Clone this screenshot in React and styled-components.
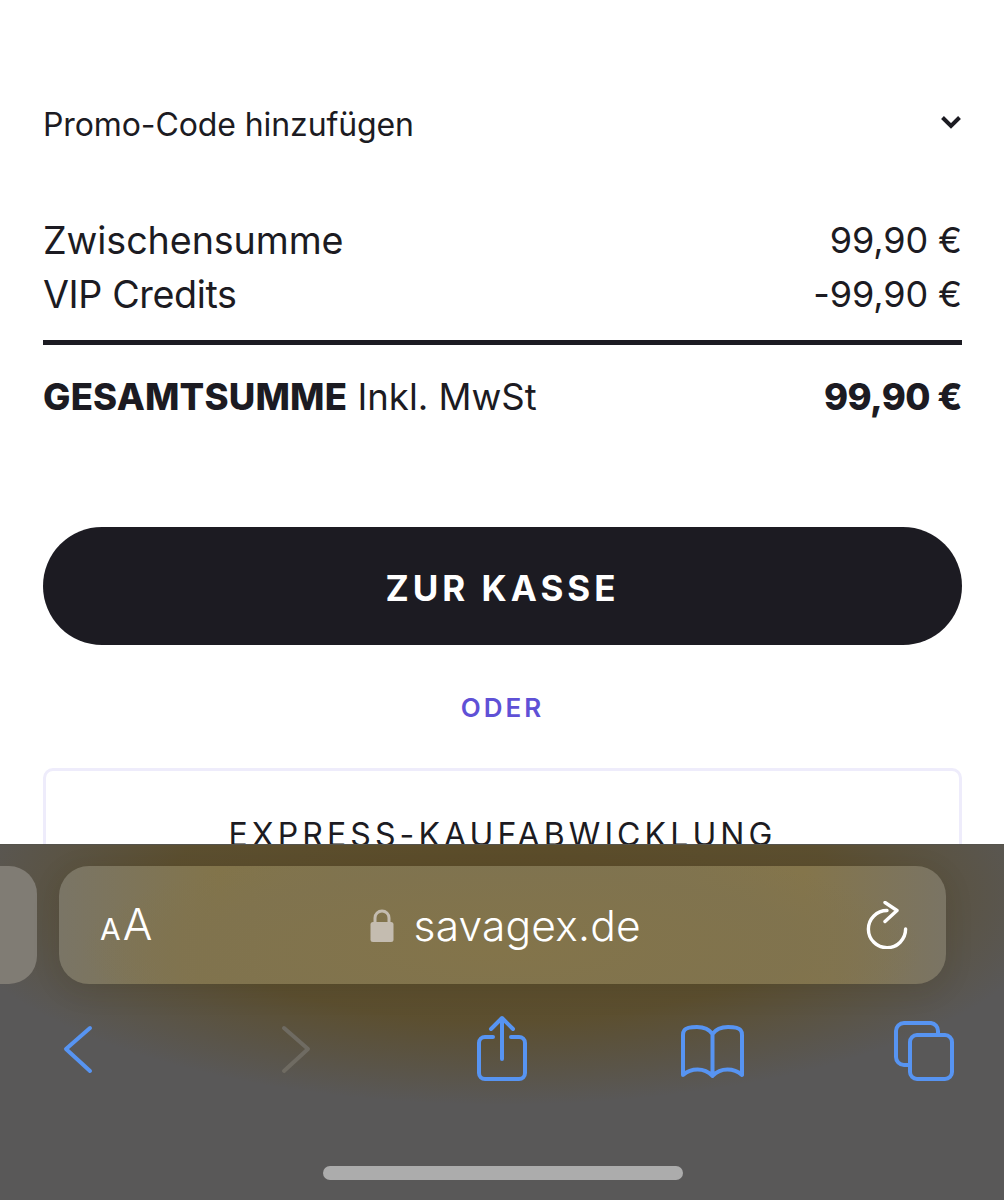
import React from "react";
import styled, { createGlobalStyle } from "styled-components";

const Global = createGlobalStyle`
  html, body { margin: 0; padding: 0; background: #fff; }
  * { box-sizing: border-box; }
`;

const Page = styled.div`
  position: relative;
  width: 1004px;
  height: 1200px;
  overflow: hidden;
  background: #fff;
  color: #1c1b22;
  font-family: Inter, "Liberation Sans", sans-serif;
  padding: 103px 42px 0 43px;
`;

const PromoRow = styled.div`
  display: flex;
  justify-content: space-between;
  align-items: center;
  height: 42px;
  font-size: 32px;
  letter-spacing: -0.1px;
`;

const Chevron = styled.svg`
  width: 22px;
  height: 14px;
  margin-top: -4px;
`;

const Summary = styled.div`
  margin-top: 71px;
  display: flex;
  flex-direction: column;
  gap: 6px;
`;

const Row = styled.div`
  display: flex;
  justify-content: space-between;
  align-items: center;
  height: 48px;
  font-size: 37.7px;
  letter-spacing: ${(p) => p.$tracking || "-0.1px"};
`;

const Value = styled.span`
  font-size: 36px;
  letter-spacing: -0.1px;
`;

const Rule = styled.div`
  height: 5px;
  margin-top: 22px;
  background: #1c1b22;
`;

const TotalRow = styled.div`
  display: flex;
  justify-content: space-between;
  align-items: center;
  height: 48px;
  margin-top: 28px;
  font-size: 36.5px;
`;

const Strong = styled.strong`
  font-weight: 800;
  letter-spacing: ${(p) => p.$tracking || "-0.6px"};
`;

const Checkout = styled.button`
  display: block;
  width: 100%;
  height: 118px;
  margin-top: 106px;
  padding: 3px 0 0;
  border: 0;
  border-radius: 59px;
  background: #1c1b22;
  color: #fff;
  font: 700 35px Inter, "Liberation Sans", sans-serif;
  letter-spacing: 4px;
`;

const Or = styled.div`
  margin-top: 46px;
  height: 34px;
  line-height: 34px;
  text-align: center;
  color: #5f51d6;
  font-size: 26px;
  font-weight: 600;
  letter-spacing: 3px;
`;

const Express = styled.div`
  margin-top: 43px;
  height: 300px;
  border: 3px solid #eeecfb;
  border-radius: 10px;
  padding-top: 46px;
  text-align: center;
  font-size: 32px;
  line-height: 36px;
  letter-spacing: 4.1px;
`;

const Safari = styled.div`
  position: absolute;
  left: 0;
  right: 0;
  top: 844px;
  bottom: 0;
  border-top: 1px solid #55534c;
  background:
    radial-gradient(ellipse 560px 210px at 50% 50px, rgba(92, 76, 40, 1) 0%, rgba(92, 78, 44, 0.92) 60%, rgba(90, 86, 80, 0) 100%),
    #595858;
`;

const TabPeek = styled.div`
  position: absolute;
  left: -40px;
  top: 21px;
  width: 77px;
  height: 118px;
  border-radius: 28px;
  background: #807c74;
`;

const Address = styled.div`
  position: absolute;
  left: 59px;
  top: 21px;
  width: 887px;
  height: 118px;
  border-radius: 30px;
  background:
    radial-gradient(ellipse 420px 110px at 50% 70%, rgba(131, 116, 74, 1) 0%, rgba(128, 115, 78, 0.9) 70%, rgba(122, 116, 100, 0) 100%),
    linear-gradient(90deg, #7a7566 0%, #82744a 18%, #7d7454 50%, #84754b 84%, #7a7464 100%);
  box-shadow: 0 6px 28px rgba(40, 34, 20, 0.14);
  display: flex;
  align-items: center;
  justify-content: space-between;
  padding: 0 38px 0 41px;
  color: #fff;
`;

const TextSize = styled.div`
  display: flex;
  align-items: baseline;
  font-size: 44px;
  line-height: 1;
  font-weight: 300;
  margin-top: -2px;
`;

const SmallA = styled.span`
  font-size: 30px;
  font-weight: 400;
  margin-right: 2px;
`;

const Domain = styled.div`
  display: flex;
  align-items: center;
  gap: 20px;
  margin-left: -8px;
  font-size: 42.5px;
  font-weight: 300;
  letter-spacing: 0.2px;
`;

const Toolbar = styled.div`
  position: absolute;
  left: 0;
  right: 0;
  top: 179px;
  height: 66px;
  display: grid;
  grid-template-columns: 64px 218px 195px 204px 213px 60px;
`;

const ToolIcon = styled.svg`
  display: block;
  overflow: visible;
  fill: none;
  stroke: ${(p) => p.$tone || "#5794f2"};
  stroke-width: 4;
  stroke-linecap: round;
  stroke-linejoin: round;
  margin-top: ${(p) => p.$shift || 0}px;
`;

const HomeBar = styled.div`
  position: absolute;
  left: 323px;
  top: 321px;
  width: 360px;
  height: 14px;
  border-radius: 7px;
  background: #acacac;
`;

const Lock = () => (
  <svg width="24" height="35" viewBox="0 0 24 35" aria-hidden="true">
    <path d="M5 16V10a7 7 0 0 1 14 0v6" fill="none" stroke="#c4bcb0" strokeWidth="3" />
    <rect x="0.5" y="14" width="23" height="20" rx="2.5" fill="#c4bcb0" />
  </svg>
);

const Reload = () => (
  <svg width="42" height="48" viewBox="0 0 42 48" aria-hidden="true" fill="none" stroke="#fff" strokeWidth="3.4" strokeLinecap="round" strokeLinejoin="round">
    <path d="M21 9.5 A18.6 18.6 0 1 0 39.6 28" />
    <path d="M19 1.5 L31 9.5 L19 20.5" />
  </svg>
);

export default function App() {
  return (
    <Page>
      <Global />
      <PromoRow>
        <span>Promo-Code hinzufügen</span>
        <Chevron viewBox="0 0 22 14" aria-hidden="true">
          <path d="M2.5 2.5 L11 11 L19.5 2.5" fill="none" stroke="#1c1b22" strokeWidth="4" />
        </Chevron>
      </PromoRow>
      <Summary>
        <Row><span>Zwischensumme</span><Value>99,90 €</Value></Row>
        <Row $tracking="-0.4px"><span>VIP Credits</span><Value>-99,90 €</Value></Row>
      </Summary>
      <Rule />
      <TotalRow>
        <span><Strong $tracking="0.2px">GESAMTSUMME</Strong> Inkl. MwSt</span>
        <Strong>99,90 €</Strong>
      </TotalRow>
      <Checkout>ZUR KASSE</Checkout>
      <Or>ODER</Or>
      <Express>EXPRESS-KAUFABWICKLUNG</Express>
      <Safari>
        <TabPeek />
        <Address>
          <TextSize><SmallA>A</SmallA>A</TextSize>
          <Domain><Lock />savagex.de</Domain>
          <Reload />
        </Address>
        <Toolbar>
          <span />
          <ToolIcon width="28" height="50" viewBox="0 0 28 50">
            <path d="M26 4 L2 25 L26 47" />
          </ToolIcon>
          <ToolIcon width="28" height="50" viewBox="0 0 28 50" $tone="#6f6b62">
            <path d="M2 4 L26 25 L2 47" />
          </ToolIcon>
          <ToolIcon width="52" height="66" viewBox="0 0 52 66" $shift={-8}>
            <path d="M16 21H8a6 6 0 0 0-6 6v30a6 6 0 0 0 6 6h34a6 6 0 0 0 6-6V27a6 6 0 0 0-6-6h-8" />
            <path d="M25 43V3M14 13 25 2l11 11" />
          </ToolIcon>
          <ToolIcon width="64" height="52" viewBox="0 0 64 52" $shift={1}>
            <path d="M31.5 9C28 4 22 2 16 2 10 2 5 3 3.5 5 2.3 6.500 2 8 2 10V50C10 43 23 42 31.500 51 40 42 53 43 61 50V10C61 8 60.700 6.500 59.500 5 58 3 53 2 47 2 41 2 35 4 31.500 9ZM31.500 9V51" />
          </ToolIcon>
          <ToolIcon width="60" height="60" viewBox="0 0 60 60" $shift={-3}>
            <path d="M44 14v-4a8 8 0 0 0-7-8H10a8 8 0 0 0-8 8v26a8 8 0 0 0 8 8h4" />
            <rect x="16" y="14" width="42" height="44" rx="7" />
          </ToolIcon>
        </Toolbar>
        <HomeBar />
      </Safari>
    </Page>
  );
}
